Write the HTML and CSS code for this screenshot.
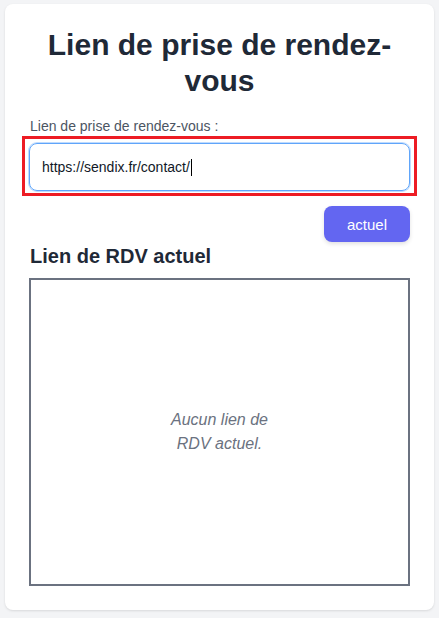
FILE: index.html
```html
<!DOCTYPE html>
<html lang="fr">
<head>
<meta charset="utf-8">
<title>Lien de prise de rendez-vous</title>
<link rel="stylesheet" href="styles.css">
</head>
<body>
<main class="card">
  <h1 class="title">Lien de prise de rendez-vous</h1>
  <label class="label" for="link">Lien de prise de rendez-vous :</label>
  <div class="highlight">
    <div class="input"><span>https://sendix.fr/contact/</span><span class="caret"></span></div>
  </div>
  <div class="actions">
    <button class="btn" type="button">actuel</button>
  </div>
  <h2 class="subtitle">Lien de RDV actuel</h2>
  <div class="preview">
    <p class="empty">Aucun lien de RDV actuel.</p>
  </div>
</main>
</body>
</html>
```
FILE: styles.css
```css
* { box-sizing: border-box; }
html, body { margin: 0; padding: 0; }
body {
  background: #f3f4f6;
  font-family: "Liberation Sans", Arial, sans-serif;
  padding: 4px 5px 8px 5px;
}
.card {
  background: #ffffff;
  border-radius: 8px;
  box-shadow: 0 1px 3px rgba(0,0,0,0.08), 0 1px 2px rgba(0,0,0,0.04);
  padding: 23px 24px 24px 24px;
  height: 606px;
  display: flex;
  flex-direction: column;
}
.title {
  margin: 0 0 17px 0;
  font-size: 30px;
  line-height: 36px;
  font-weight: 700;
  text-align: center;
  color: #1f2937;
  padding: 0 16px;
}
.label {
  display: block;
  font-size: 14px;
  line-height: 20px;
  color: #4b5563;
  padding-left: 1px;
}
.highlight {
  margin: 0 -7px;
  border: 3px solid #ed1c24;
  padding: 4px 4px 2px 4px;
}
.input {
  height: 48px;
  border: 1px solid #60a5fa;
  box-shadow: 0 0 0 1px #bfdbfe;
  border-radius: 8px;
  padding: 0 12px;
  display: flex;
  align-items: center;
  font-size: 14px;
  color: #111827;
}
.caret {
  display: inline-block;
  width: 1px;
  height: 17px;
  background: #000;
  margin-left: 1px;
}
.actions {
  display: flex;
  justify-content: flex-end;
  margin-top: 10px;
}
.btn {
  width: 86px;
  height: 36px;
  border: none;
  border-radius: 8px;
  background: #6366f1;
  color: #ffffff;
  font-family: "Liberation Sans", Arial, sans-serif;
  font-size: 15px;
  box-shadow: 0 2px 4px rgba(0,0,0,0.12);
  padding: 0;
}
.subtitle {
  margin: 0 0 8px 0;
  font-size: 20px;
  line-height: 28px;
  font-weight: 700;
  color: #1f2937;
  padding-left: 1px;
}
.preview {
  flex: 1;
  border: 2px solid #6b7280;
  display: flex;
  align-items: center;
  justify-content: center;
}
.empty {
  margin: 0;
  max-width: 110px;
  text-align: center;
  font-style: italic;
  font-size: 16px;
  line-height: 24px;
  color: #6b7280;
}
```
